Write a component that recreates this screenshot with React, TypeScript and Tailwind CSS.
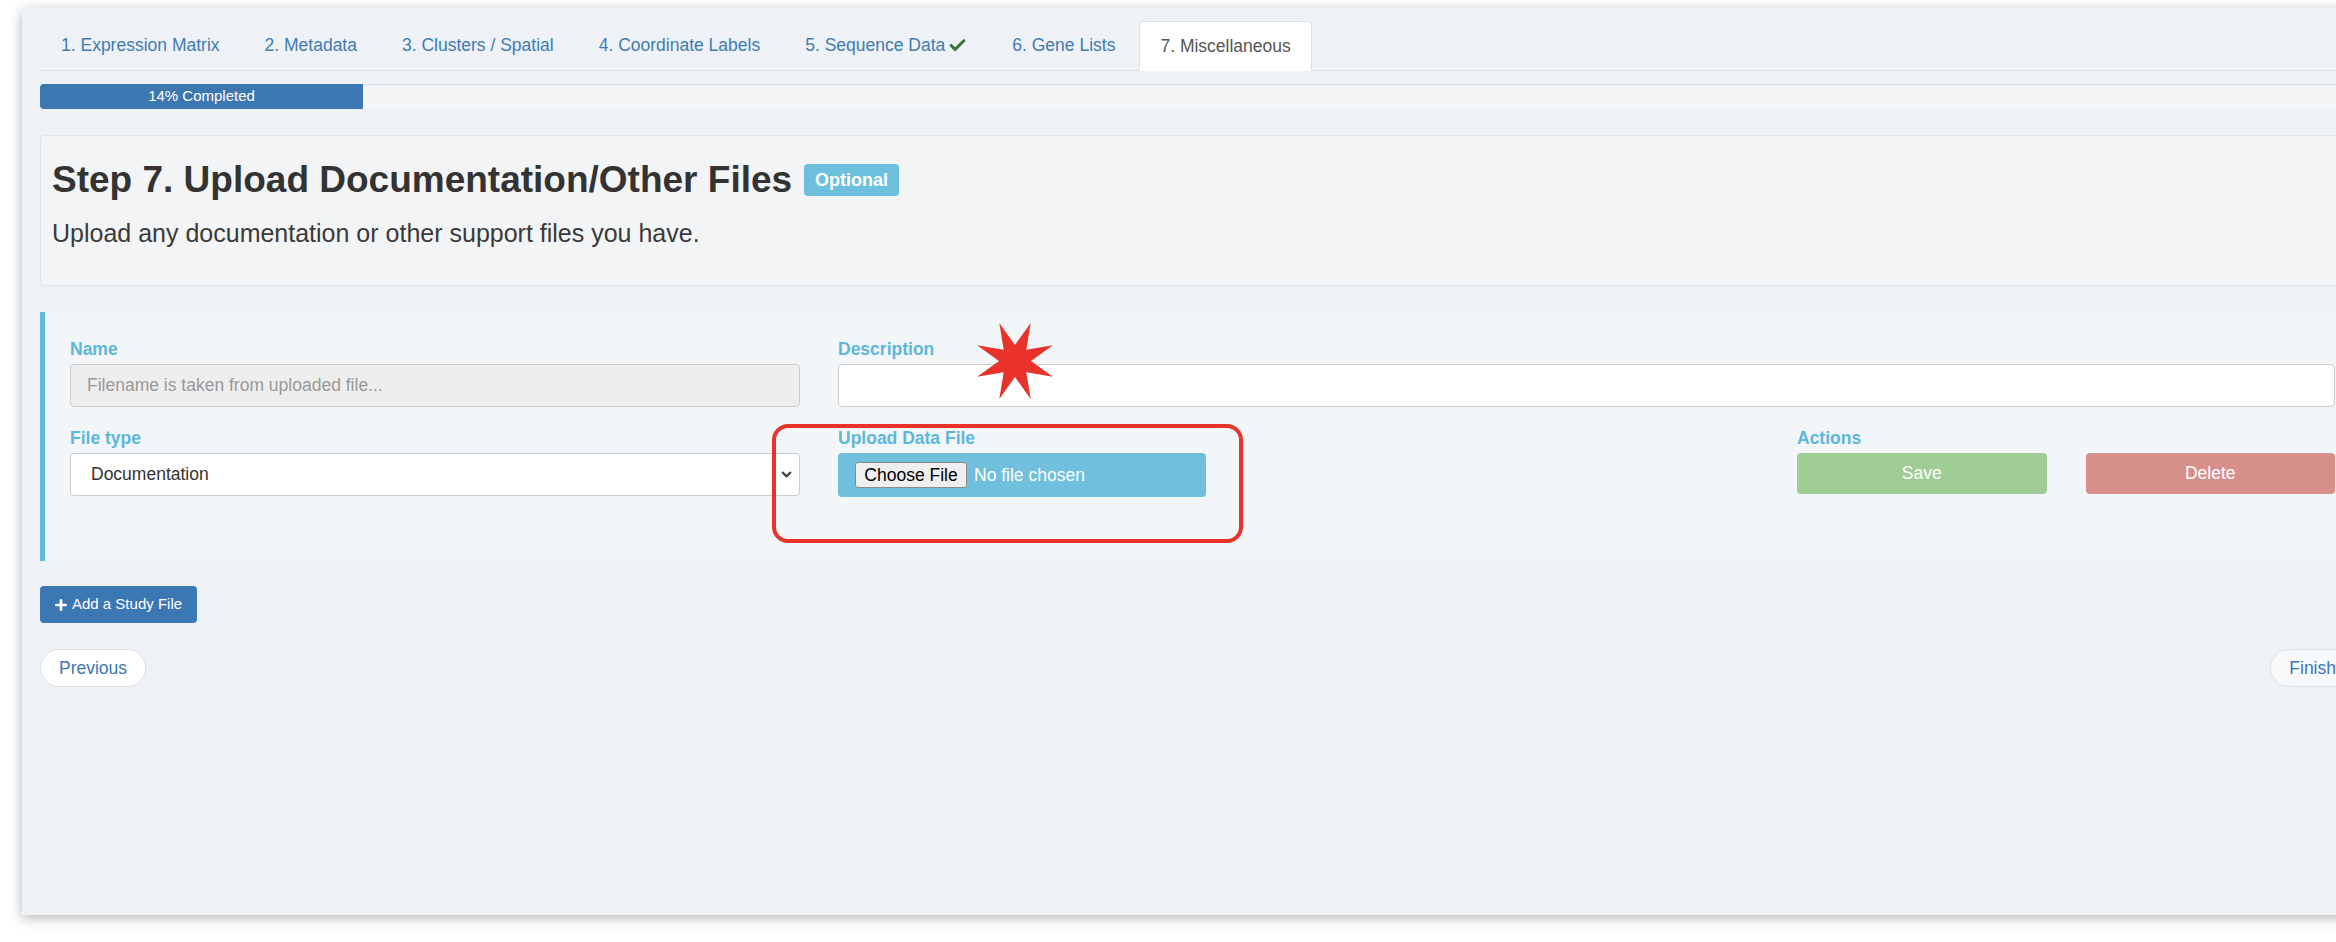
import { Check, ChevronDown, Plus } from "lucide-react"

const tabs = [
  { label: "1. Expression Matrix" },
  { label: "2. Metadata" },
  { label: "3. Clusters / Spatial" },
  { label: "4. Coordinate Labels" },
  { label: "5. Sequence Data", done: true },
  { label: "6. Gene Lists" },
  { label: "7. Miscellaneous", active: true },
]

// 8-point star used as a red annotation mark
const starPoints = (() => {
  const pts: string[] = []
  for (let i = 0; i < 16; i++) {
    const outer = i % 2 === 0
    const r = outer ? 41 : 16
    const a = ((22.5 + i * 22.5) * Math.PI) / 180
    pts.push(`${(42 + r * Math.cos(a)).toFixed(2)},${(42 + r * Math.sin(a)).toFixed(2)}`)
  }
  return pts.join(" ")
})()

function FieldLabel({ children }: { children: string }) {
  return <p className="mb-[2px] text-[17.5px] font-bold leading-[25px] text-[#5eb6d9]">{children}</p>
}

function App() {
  return (
    <div className="relative h-[942px] w-full overflow-hidden bg-white font-['Liberation_Sans',Arial,sans-serif]">
      <div className="ml-[22px] mt-[8px] h-[907px] w-[2351px] bg-[#eef2f6] px-[18px] pt-[13px] shadow-[0_3px_12px_rgba(0,0,0,0.3)]">

        {/* step tabs */}
        <ul className="flex h-[50px] border-b border-[#dde1e6]">
          {tabs.map((t) => (
            <li
              key={t.label}
              className={
                t.active
                  ? "-mb-px mr-[3px] flex items-center rounded-t-[4px] border border-[#dcdfe3] border-b-white bg-white px-[20px] text-[17.5px] text-[#555]"
                  : "mr-[3px] flex items-center border border-transparent px-[20px] text-[17.5px] text-[#417bb3]"
              }
            >
              {t.label}
              {t.done && <Check size={19} strokeWidth={4} className="ml-[3px] text-[#3c763d]" />}
            </li>
          ))}
        </ul>

        {/* progress */}
        <div className="mt-[13px] h-[25px] overflow-hidden rounded-[4px] bg-[#f4f5f7] shadow-[inset_0_1px_2px_rgba(0,0,0,0.1)]">
          <div className="flex h-full w-[323px] items-center justify-center bg-[#3d77b1] text-[15px] text-white">14% Completed</div>
        </div>

        {/* step header */}
        <div className="mt-[26px] h-[151px] rounded-[4px] border border-[#dfe2e6] bg-[#f3f4f6] pl-[11px] pt-[23px]">
          <h2 className="flex items-center gap-[12px] text-[37px] font-bold leading-[41px] text-[#333]">
            Step 7. Upload Documentation/Other Files
            <span className="flex h-[32px] items-center rounded-[4px] bg-[#6cbfdd] px-[11px] text-[18px] leading-none text-white">Optional</span>
          </h2>
          <p className="mt-[16px] text-[25px] font-light leading-[35px] text-[#3a3a3a]">Upload any documentation or other support files you have.</p>
        </div>

        {/* study file form */}
        <div className="mt-[26px] h-[249px] border-l-[5px] border-[#5bc0de] bg-[#f3f6f9] pl-[25px] pr-[20px] pt-[25px]">
          <div className="flex gap-[38px]">
            <div className="w-[730px]">
              <FieldLabel>Name</FieldLabel>
              <div className="flex h-[43px] items-center rounded-[4px] border border-[#ccc] bg-[#eee] px-[16px] text-[17.5px] text-[#999]">
                Filename is taken from uploaded file...
              </div>
            </div>
            <div className="flex-1">
              <FieldLabel>Description</FieldLabel>
              <div className="h-[43px] rounded-[4px] border border-[#ccc] bg-white" />
            </div>
          </div>

          <div className="mt-[19px] flex">
            <div className="w-[730px]">
              <FieldLabel>File type</FieldLabel>
              <div className="flex h-[43px] items-center justify-between rounded-[4px] border border-[#ccc] bg-white pl-[20px] pr-[5px] text-[17.5px] text-[#333]">
                Documentation
                <ChevronDown size={15} strokeWidth={3.5} className="text-[#444]" />
              </div>
            </div>
            <div className="ml-[38px] w-[368px]">
              <FieldLabel>Upload Data File</FieldLabel>
              <div className="flex h-[44px] items-center rounded-[4px] bg-[#70bfdc] pl-[17px] text-[17.5px]">
                <span className="flex h-[26px] w-[112px] items-center justify-center rounded-[3px] border border-[#8a8a8a] bg-[#efefef] text-black">Choose File</span>
                <span className="ml-[7px] text-white">No file chosen</span>
              </div>
            </div>
            <div className="ml-auto w-[538px]">
              <FieldLabel>Actions</FieldLabel>
              <div className="grid grid-cols-2 gap-[39px] text-[17.5px] text-white">
                <button className="h-[41px] rounded-[4px] bg-[#a0cd96]">Save</button>
                <button className="h-[41px] rounded-[4px] bg-[#d68f8b]">Delete</button>
              </div>
            </div>
          </div>
        </div>

        <button className="mt-[25px] flex h-[37px] w-[157px] items-center gap-[3px] rounded-[4px] bg-[#3b77b2] pl-[13px] text-[15px] text-white">
          <Plus size={16} strokeWidth={4} />
          Add a Study File
        </button>

        <div className="mt-[26px] flex justify-between">
          <button className="h-[38px] rounded-full border border-[#dde1e5] bg-white px-[18px] text-[17.5px] text-[#3c78b2]">Previous</button>
          <button className="h-[38px] rounded-full border border-[#dde1e5] bg-[#f7f9fb] px-[18px] text-[17.5px] text-[#3c78b2]">Finish</button>
        </div>
      </div>

      {/* red annotation marks */}
      <svg className="absolute left-[973px] top-[319px]" width="84" height="84" viewBox="0 0 84 84">
        <polygon points={starPoints} fill="#e8322a" />
      </svg>
      <div className="absolute left-[772px] top-[424px] h-[119px] w-[471px] rounded-[16px] border-[4px] border-[#e8322a]" />
    </div>
  )
}

export default App
